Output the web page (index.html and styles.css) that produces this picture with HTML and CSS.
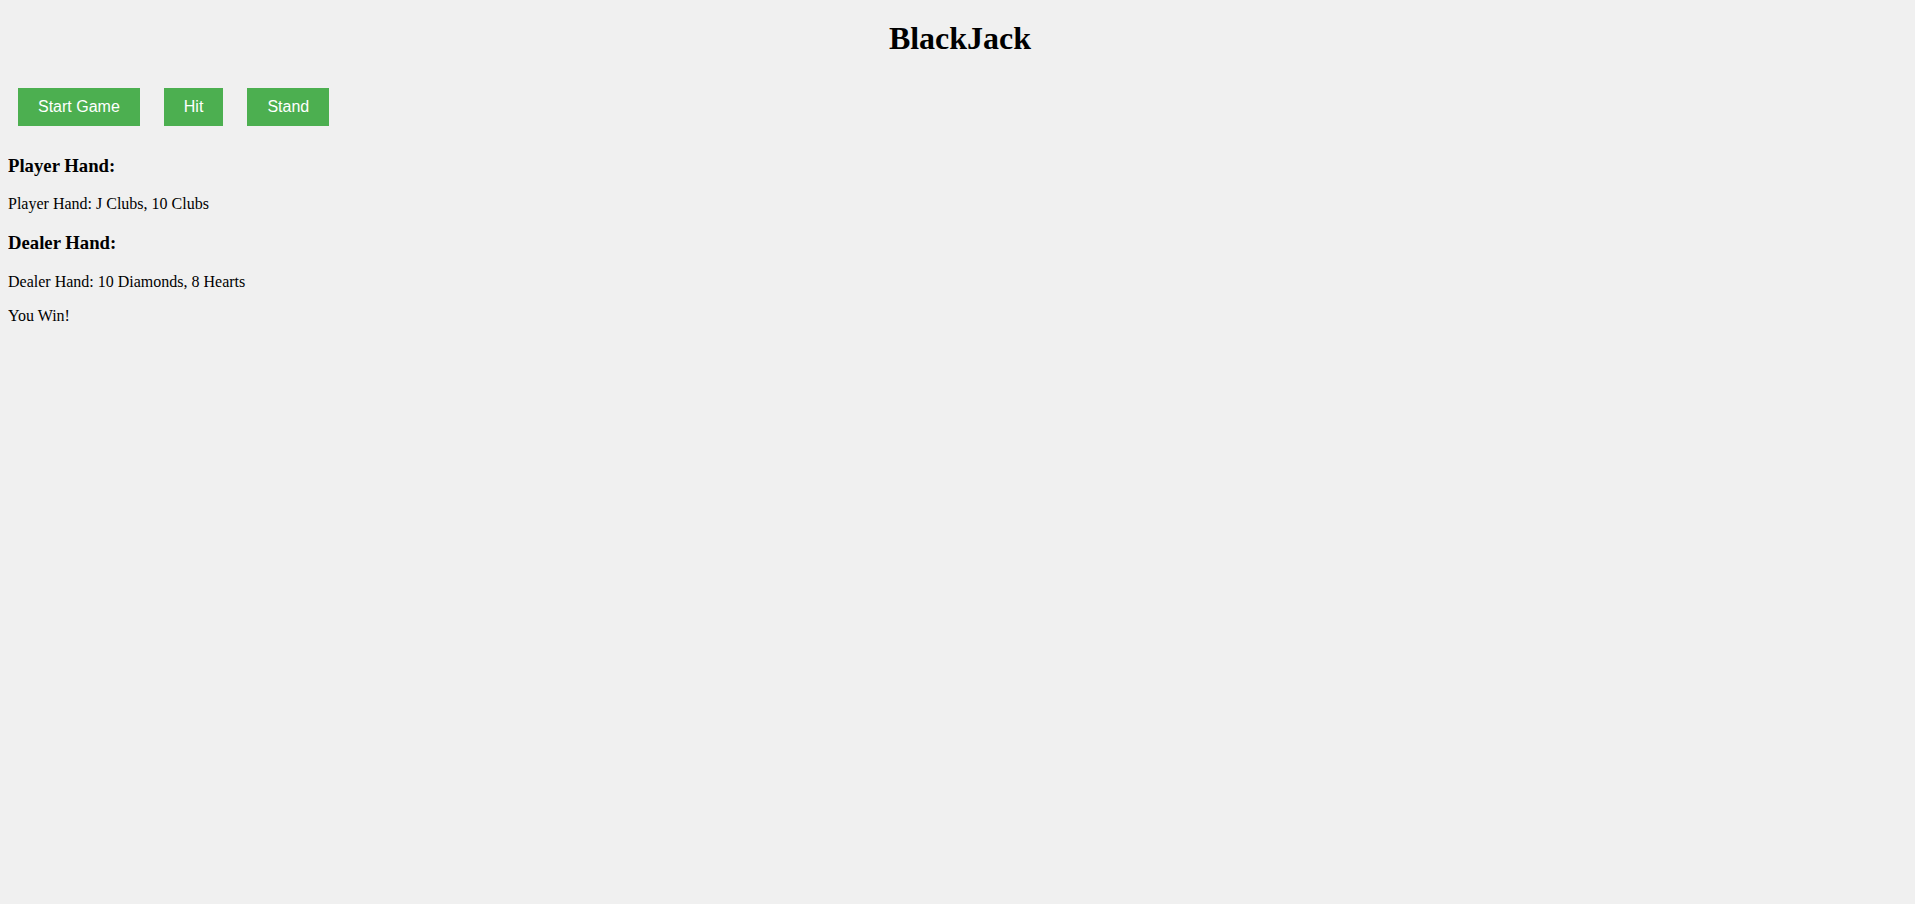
FILE: index.html
```html
<!DOCTYPE html>
<html>
<head>
<meta charset="utf-8">
<title>BlackJack</title>
<link rel="stylesheet" href="styles.css">
</head>
<body>
<h1 class="title">BlackJack</h1>
<div class="controls">
<button class="btn">Start Game</button>
<button class="btn">Hit</button>
<button class="btn">Stand</button>
</div>
<div class="hand">
<h3 class="hand-title">Player Hand:</h3>
<p class="hand-cards">Player Hand: J Clubs, 10 Clubs</p>
</div>
<div class="hand">
<h3 class="hand-title">Dealer Hand:</h3>
<p class="hand-cards">Dealer Hand: 10 Diamonds, 8 Hearts</p>
</div>
<p class="result">You Win!</p>
</body>
</html>
```
FILE: styles.css
```css
html, body {
  background: #f0f0f0;
}
body {
  margin: 8px;
  font-family: "Liberation Serif", "Times New Roman", serif;
  font-size: 16px;
  color: #000;
}
.title {
  text-align: center;
  font-size: 32px;
  margin: 11.5px 0 21.44px;
  padding-left: 5px;
}
.btn {
  background: #4caf50;
  color: #fff;
  border: none;
  padding: 10px 20px;
  margin: 10px;
  font-family: "Liberation Sans", Arial, sans-serif;
  font-size: 16px;
  cursor: pointer;
}
.hand-title {
  font-size: 18.72px;
  margin: 18.72px 0;
}
.hand-cards, .result {
  margin: 16px 0;
}
```
